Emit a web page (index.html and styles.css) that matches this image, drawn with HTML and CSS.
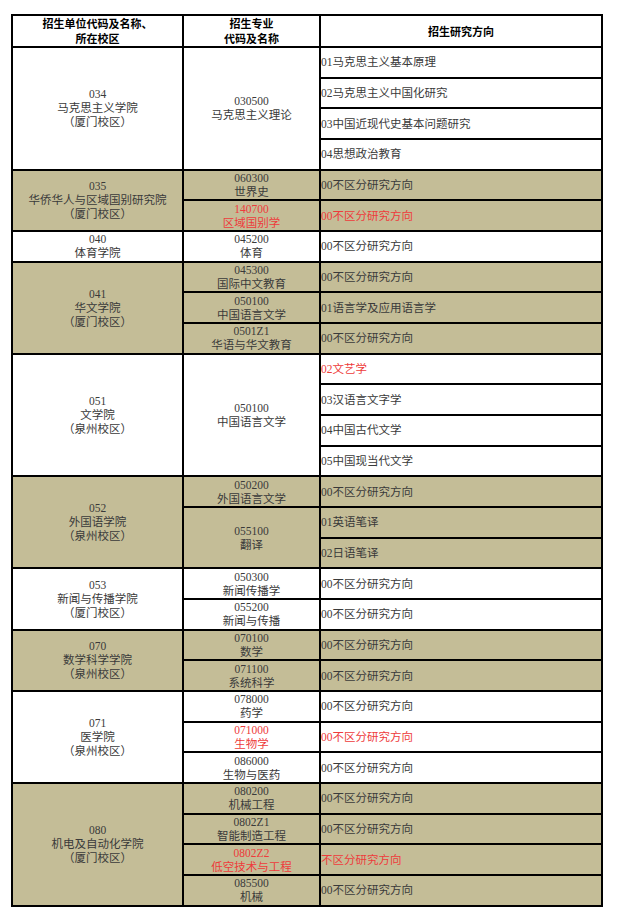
FILE: index.html
```html
<!DOCTYPE html>
<html lang="zh-CN">
<head>
<meta charset="utf-8">
<title>招生目录</title>
<link rel="stylesheet" href="styles.css">
</head>
<body>
<table class="catalog">
  <colgroup>
    <col class="c1"><col class="c2"><col class="c3">
  </colgroup>
  <thead>
    <tr class="head">
      <th>招生单位代码及名称、<br>所在校区</th>
      <th>招生专业<br>代码及名称</th>
      <th>招生研究方向</th>
    </tr>
  </thead>
  <tbody>
    <tr>
      <td class="unit" rowspan="4">034<br>马克思主义学院<br>（厦门校区）</td>
      <td class="major" rowspan="4">030500<br>马克思主义理论</td>
      <td class="dir">01马克思主义基本原理</td>
    </tr>
    <tr><td class="dir">02马克思主义中国化研究</td></tr>
    <tr><td class="dir">03中国近现代史基本问题研究</td></tr>
    <tr><td class="dir">04思想政治教育</td></tr>

    <tr class="tan">
      <td class="unit" rowspan="2">035<br>华侨华人与区域国别研究院<br>（厦门校区）</td>
      <td class="major">060300<br>世界史</td>
      <td class="dir">00不区分研究方向</td>
    </tr>
    <tr class="tan">
      <td class="major red">140700<br>区域国别学</td>
      <td class="dir red">00不区分研究方向</td>
    </tr>

    <tr>
      <td class="unit">040<br>体育学院</td>
      <td class="major">045200<br>体育</td>
      <td class="dir">00不区分研究方向</td>
    </tr>

    <tr class="tan">
      <td class="unit" rowspan="3">041<br>华文学院<br>（厦门校区）</td>
      <td class="major">045300<br>国际中文教育</td>
      <td class="dir">00不区分研究方向</td>
    </tr>
    <tr class="tan">
      <td class="major">050100<br>中国语言文学</td>
      <td class="dir">01语言学及应用语言学</td>
    </tr>
    <tr class="tan">
      <td class="major">0501Z1<br>华语与华文教育</td>
      <td class="dir">00不区分研究方向</td>
    </tr>

    <tr>
      <td class="unit" rowspan="4">051<br>文学院<br>（泉州校区）</td>
      <td class="major" rowspan="4">050100<br>中国语言文学</td>
      <td class="dir red">02文艺学</td>
    </tr>
    <tr><td class="dir">03汉语言文字学</td></tr>
    <tr><td class="dir">04中国古代文学</td></tr>
    <tr><td class="dir">05中国现当代文学</td></tr>

    <tr class="tan">
      <td class="unit" rowspan="3">052<br>外国语学院<br>（泉州校区）</td>
      <td class="major">050200<br>外国语言文学</td>
      <td class="dir">00不区分研究方向</td>
    </tr>
    <tr class="tan">
      <td class="major" rowspan="2">055100<br>翻译</td>
      <td class="dir">01英语笔译</td>
    </tr>
    <tr class="tan"><td class="dir">02日语笔译</td></tr>

    <tr>
      <td class="unit" rowspan="2">053<br>新闻与传播学院<br>（厦门校区）</td>
      <td class="major">050300<br>新闻传播学</td>
      <td class="dir">00不区分研究方向</td>
    </tr>
    <tr>
      <td class="major">055200<br>新闻与传播</td>
      <td class="dir">00不区分研究方向</td>
    </tr>

    <tr class="tan">
      <td class="unit" rowspan="2">070<br>数学科学学院<br>（泉州校区）</td>
      <td class="major">070100<br>数学</td>
      <td class="dir">00不区分研究方向</td>
    </tr>
    <tr class="tan">
      <td class="major">071100<br>系统科学</td>
      <td class="dir">00不区分研究方向</td>
    </tr>

    <tr>
      <td class="unit" rowspan="3">071<br>医学院<br>（泉州校区）</td>
      <td class="major">078000<br>药学</td>
      <td class="dir">00不区分研究方向</td>
    </tr>
    <tr>
      <td class="major red">071000<br>生物学</td>
      <td class="dir red">00不区分研究方向</td>
    </tr>
    <tr>
      <td class="major">086000<br>生物与医药</td>
      <td class="dir">00不区分研究方向</td>
    </tr>

    <tr class="tan">
      <td class="unit" rowspan="4">080<br>机电及自动化学院<br>（厦门校区）</td>
      <td class="major">080200<br>机械工程</td>
      <td class="dir">00不区分研究方向</td>
    </tr>
    <tr class="tan">
      <td class="major">0802Z1<br>智能制造工程</td>
      <td class="dir">00不区分研究方向</td>
    </tr>
    <tr class="tan">
      <td class="major red">0802Z2<br>低空技术与工程</td>
      <td class="dir red">不区分研究方向</td>
    </tr>
    <tr class="tan">
      <td class="major">085500<br>机械</td>
      <td class="dir">00不区分研究方向</td>
    </tr>
  </tbody>
</table>
</body>
</html>
```

FILE: styles.css
```css
html, body {
  margin: 0;
  padding: 0;
  background: #ffffff;
}

body {
  padding: 14px 0 0 11px;
  font-family: "Liberation Serif", "Noto Sans CJK SC", serif;
  font-size: 11.5px;
  color: #3a3a3a;
}

.catalog {
  border-collapse: collapse;
  table-layout: fixed;
  width: 592px;
  border: 2px solid #000;
}

.c1 { width: 171px; }
.c2 { width: 137px; }
.c3 { width: 282px; }

.catalog th,
.catalog td {
  border: 2px solid #000;
  padding: 0;
  line-height: 14px;
  vertical-align: middle;
  overflow: hidden;
}

.catalog th {
  font-family: "Noto Sans CJK SC", sans-serif;
  font-weight: 700;
  font-size: 11px;
  color: #000;
  text-align: center;
  line-height: 15px;
}

.head { height: 31px; }

.catalog tbody tr { height: 30.68px; }

.tan td { background: #c4bd97; }

.unit,
.major {
  text-align: center;
}

.dir {
  text-align: left;
  padding-left: 2px;
  white-space: nowrap;
}

.red { color: #ee3b3b; }
```
